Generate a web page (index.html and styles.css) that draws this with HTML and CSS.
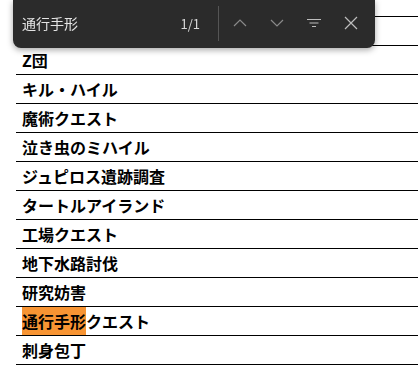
FILE: index.html
```html
<!DOCTYPE html>
<html lang="ja">
<head>
  <meta charset="UTF-8">
  <meta name="viewport" content="width=device-width, initial-scale=1.0">
  <title>通行手形</title>
  <link rel="stylesheet" href="styles.css">
</head>
<body>
  <ul class="list">
    <li class="row row-cut"></li>
    <li class="row"></li>
    <li class="row">Z団</li>
    <li class="row">キル・ハイル</li>
    <li class="row">魔術クエスト</li>
    <li class="row">泣き虫のミハイル</li>
    <li class="row">ジュピロス遺跡調査</li>
    <li class="row">タートルアイランド</li>
    <li class="row">工場クエスト</li>
    <li class="row">地下水路討伐</li>
    <li class="row">研究妨害</li>
    <li class="row"><mark class="hit">通行手形</mark>クエスト</li>
    <li class="row">刺身包丁</li>
  </ul>

  <!-- 検索バー -->
  <div class="find-bar">
    <span class="find-query">通行手形</span>
    <span class="find-count">1/1</span>
    <span class="find-sep"></span>
    <button class="find-btn dim" title="前へ">
      <svg width="14" height="8" viewBox="0 0 14 8"><path d="M1 7 L7 1 L13 7" fill="none" stroke="currentColor" stroke-width="1.2"/></svg>
    </button>
    <button class="find-btn dim" title="次へ">
      <svg width="14" height="8" viewBox="0 0 14 8"><path d="M1 1 L7 7 L13 1" fill="none" stroke="currentColor" stroke-width="1.2"/></svg>
    </button>
    <button class="find-btn" title="オプション">
      <svg width="16" height="10" viewBox="0 0 16 10"><path d="M1 1.5 H15 M3.5 5 H12.5 M6 8.5 H10" fill="none" stroke="currentColor" stroke-width="1.2"/></svg>
    </button>
    <button class="find-btn" title="閉じる">
      <svg width="14" height="14" viewBox="0 0 14 14"><path d="M1 1 L13 13 M13 1 L1 13" fill="none" stroke="currentColor" stroke-width="1.2"/></svg>
    </button>
  </div>
</body>
</html>
```

FILE: styles.css
```css
* {
  margin: 0;
  padding: 0;
  box-sizing: border-box;
}

body {
  font-family: "Noto Sans CJK JP", "Noto Sans", sans-serif;
  background: #ffffff;
  color: #000000;
  overflow: hidden;
}

.list {
  list-style: none;
  padding-left: 16px;
}

.row {
  height: 29px;
  border-bottom: 1px solid #000;
  padding-left: 6px;
  font-size: 16px;
  font-weight: 700;
  line-height: 29px;
}

.row-cut {
  height: 17px;
}

.hit {
  background: #f79433;
  color: #000;
  padding: 2px 0;
}

.find-bar {
  position: fixed;
  top: 0;
  left: 13px;
  width: 362px;
  height: 48px;
  background: #2b2b2b;
  border-radius: 0 0 8px 8px;
  box-shadow: 0 2px 6px rgba(0, 0, 0, 0.35);
  display: flex;
  align-items: center;
  padding: 0 6px 2px 9px;
  color: #e4e4e4;
}

.find-query {
  flex: 1;
  font-size: 14px;
}

.find-count {
  font-size: 13px;
  color: #d8d8d8;
  margin-right: 18px;
}

.find-sep {
  width: 1px;
  height: 35px;
  background: #555555;
  margin-right: 2px;
}

.find-btn {
  width: 37px;
  height: 34px;
  border: none;
  background: none;
  color: #bdbdbd;
  display: flex;
  align-items: center;
  justify-content: center;
  cursor: pointer;
}

.find-btn.dim {
  color: #8a8a8a;
}
```
